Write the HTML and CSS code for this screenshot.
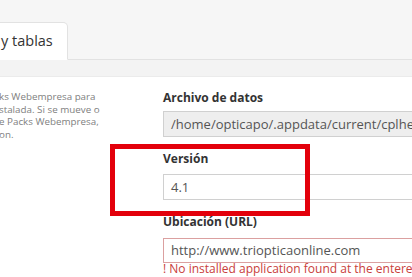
FILE: index.html
```html
<!DOCTYPE html>
<html lang="es">
<head>
<meta charset="utf-8">
<title>Configuración</title>
<link rel="stylesheet" href="styles.css">
</head>
<body>
<div class="top">
  <ul class="tabs">
    <li class="tab active">y tablas</li>
  </ul>
</div>
<div class="strip"></div>
<div class="panel">
  <p class="desc">ks Webempresa para<br>stalada. Si se mueve o<br>e Packs Webempresa,<br>on.</p>
  <div class="form">
    <div class="group g-data">
      <label class="label">Archivo de datos</label>
      <div class="input disabled">/home/opticapo/.appdata/current/cplhelp</div>
    </div>
    <div class="group g-version">
      <label class="label">Versión</label>
      <div class="input">4.1</div>
    </div>
    <div class="group g-url">
      <label class="label">Ubicación (URL)</label>
      <div class="input error">http://www.triopticaonline.com</div>
      <div class="help">! No installed application found at the entered URL</div>
    </div>
  </div>
  <div class="highlight"></div>
</div>
</body>
</html>
```

FILE: styles.css
```css
* { box-sizing: border-box; }
html, body {
  margin: 0;
  padding: 0;
  width: 412px;
  height: 277px;
  overflow: hidden;
  background: #fff;
  font-family: "Open Sans", "DejaVu Sans", sans-serif;
  color: #333;
}
.top {
  background: #f6f6f6;
  height: 60px;
  padding-top: 22px;
}
.tabs {
  list-style: none;
  margin: 0;
  padding: 0;
  display: flex;
  border-bottom: 1px solid #e2e2e2;
  height: 38px;
}
.tab {
  margin-left: -12px;
  padding: 0 14px 0 12px;
  height: 38px;
  line-height: 36px;
  font-size: 14.5px;
  color: #333;
  background: #fff;
  border: 1px solid #e2e2e2;
  border-bottom-color: transparent;
  border-radius: 0 5px 0 0;
  margin-bottom: -1px;
}
.strip {
  height: 17px;
  background: #f3f3f3;
  border-bottom: 1px solid #ebebeb;
}
.panel {
  position: relative;
  display: flex;
  background: #fff;
  height: 200px;
}
.desc {
  margin: 14px 0 0 -1px;
  width: 164px;
  font-size: 9.8px;
  line-height: 12.6px;
  color: #808080;
}
.form {
  flex: 1;
  min-width: 0;
  padding-top: 12px;
}
.group {
  display: flex;
  flex-direction: column;
}
.label {
  font-size: 12px;
  font-weight: 700;
  line-height: 17px;
  color: #333;
}
.input {
  height: 26px;
  margin-top: 5px;
  padding: 0 7px;
  border: 1px solid #d0d0d0;
  border-right: none;
  font-size: 13px;
  line-height: 24px;
  color: #555;
  white-space: nowrap;
  overflow: hidden;
  background: #fff;
}
.input.disabled {
  background: #eeeeee;
  color: #555;
}
.g-version { margin-top: 13px; }
.g-version .input { margin-top: 7px; }
.g-url { margin-top: 13px; }
.g-url .input { margin-top: 8px; height: 25px; line-height: 23px; border-color: #dba0a0; }
.help {
  margin-top: -1px;
  font-size: 12px;
  line-height: 14px;
  color: #c9403b;
  white-space: nowrap;
}
.highlight {
  position: absolute;
  left: 110px;
  top: 67px;
  width: 200px;
  height: 72px;
  border: 5px solid #e3000b;
}
```
